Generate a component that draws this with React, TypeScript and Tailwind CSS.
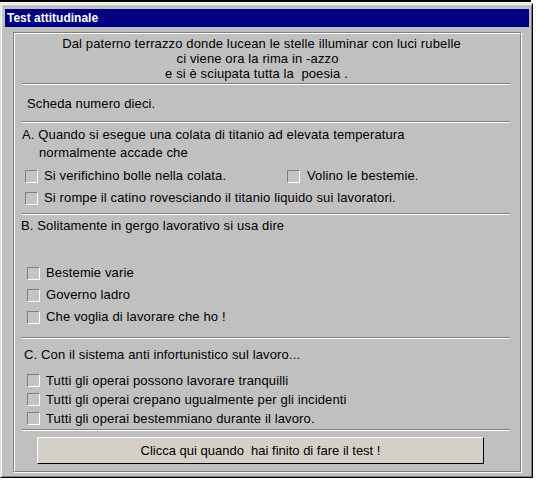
import React from 'react';

const font = "font-['Liberation_Sans',Arial,sans-serif]";

function Check() {
  return (
    <span className="block w-[13px] h-[13px] shrink-0 border border-t-[#808080] border-l-[#808080] border-r-white border-b-white bg-[#c4c4c4]" />
  );
}

function Separator({ className = '' }: { className?: string }) {
  return (
    <div className={`ml-[7px] w-[488px] h-[2px] border-t border-t-[#808080] border-b border-b-white ${className}`} />
  );
}

function Option({ label, box, gap = 'gap-[6px]', className = '' }: { label: string; box: string; gap?: string; className?: string }) {
  return (
    <div className={`flex items-center ${gap} ${box} ${className}`}>
      <Check />
      <span className="whitespace-pre">{label}</span>
    </div>
  );
}

export default function App() {
  return (
    <div className={`w-[538px] h-[481px] bg-white overflow-hidden text-[13px] text-black ${font}`}>
      <div className="h-[2px] w-[531px] bg-black" />
      {/* window */}
      <div className="mt-[1px] w-[533px] h-[475px] border border-t-[#dfdfdf] border-l-[#dfdfdf] border-r-black border-b-black">
        <div className="h-full border border-t-white border-l-white border-r-[#808080] border-b-[#808080] bg-[#c0c0c0] pt-[4px] pl-[3px] pr-[2px] flex flex-col">
          {/* title bar */}
          <div className="h-[18px] bg-[#000080] text-white font-bold text-[12px] pl-[2px] flex items-center">
            Test attitudinale
          </div>

          {/* frame */}
          <div className="mt-[5px] ml-[8px] w-[509px] h-[441px] border border-t-[#808080] border-l-[#808080] border-r-white border-b-white tracking-[0.13px]">
            <div className="h-full border border-t-white border-l-white border-r-[#808080] border-b-[#808080] flex flex-col">
              {/* poem */}
              <div className="pt-[2px] leading-[15px] text-center whitespace-pre">
                <div className="pr-[12px]">Dal paterno terrazzo donde lucean le stelle illuminar con luci rubelle</div>
                <div className="pr-[20px]">ci viene ora la rima in -azzo</div>
                <div className="pr-[22px]">e si è sciupata tutta la  poesia .</div>
              </div>
              <Separator className="mt-[2px]" />

              <div className="mt-[11px] h-[16px] leading-[16px] pl-[12px]">Scheda numero dieci.</div>
              <Separator className="mt-[9px]" />

              {/* A */}
              <div className="mt-[3px] leading-[18px]">
                <div className="pl-[7px]">A. Quando si esegue una colata di titanio ad elevata temperatura</div>
                <div className="pl-[24px]">normalmente accade che</div>
              </div>
              <div className="mt-[4px] h-[20px] flex items-center">
                <Option label="Si verifichino bolle nella colata." box="pl-[10px] w-[272px]" />
                <Option label="Volino le bestemie." box="" gap="gap-[7px]" />
              </div>
              <Option label="Si rompe il catino rovesciando il titanio liquido sui lavoratori." box="pl-[10px]" className="mt-[2px] h-[20px]" />
              <Separator className="mt-[5px]" />

              {/* B */}
              <div className="mt-[3px] h-[16px] leading-[16px] pl-[6px]">B. Solitamente in gergo lavorativo si usa dire</div>
              <Option label="Bestemie varie" box="pl-[12px]" className="mt-[29px] h-[20px]" />
              <Option label="Governo ladro" box="pl-[12px]" className="mt-[2px] h-[20px]" />
              <Option label="Che voglia di lavorare che ho !" box="pl-[12px]" className="mt-[2px] h-[20px]" />
              <Separator className="mt-[10px]" />

              {/* C */}
              <div className="mt-[8px] h-[16px] leading-[16px] pl-[9px]">C. Con il sistema anti infortunistico sul lavoro...</div>
              <div className="mt-[8px] flex flex-col">
                <Option label="Tutti gli operai possono lavorare tranquilli" box="pl-[12px]" className="h-[19px]" />
                <Option label="Tutti gli operai crepano ugualmente per gli incidenti" box="pl-[12px]" className="h-[19px]" />
                <Option label="Tutti gli operai bestemmiano durante il lavoro." box="pl-[12px]" className="h-[19px]" />
              </div>
              <Separator className="mt-[1px]" />

              <button className="mt-[6px] ml-[22px] w-[447px] h-[27px] bg-[#d4d0c8] border border-t-white border-l-white border-r-black border-b-black whitespace-pre text-center tracking-normal">
                Clicca qui quando  hai finito di fare il test !
              </button>
            </div>
          </div>
        </div>
      </div>
    </div>
  );
}
